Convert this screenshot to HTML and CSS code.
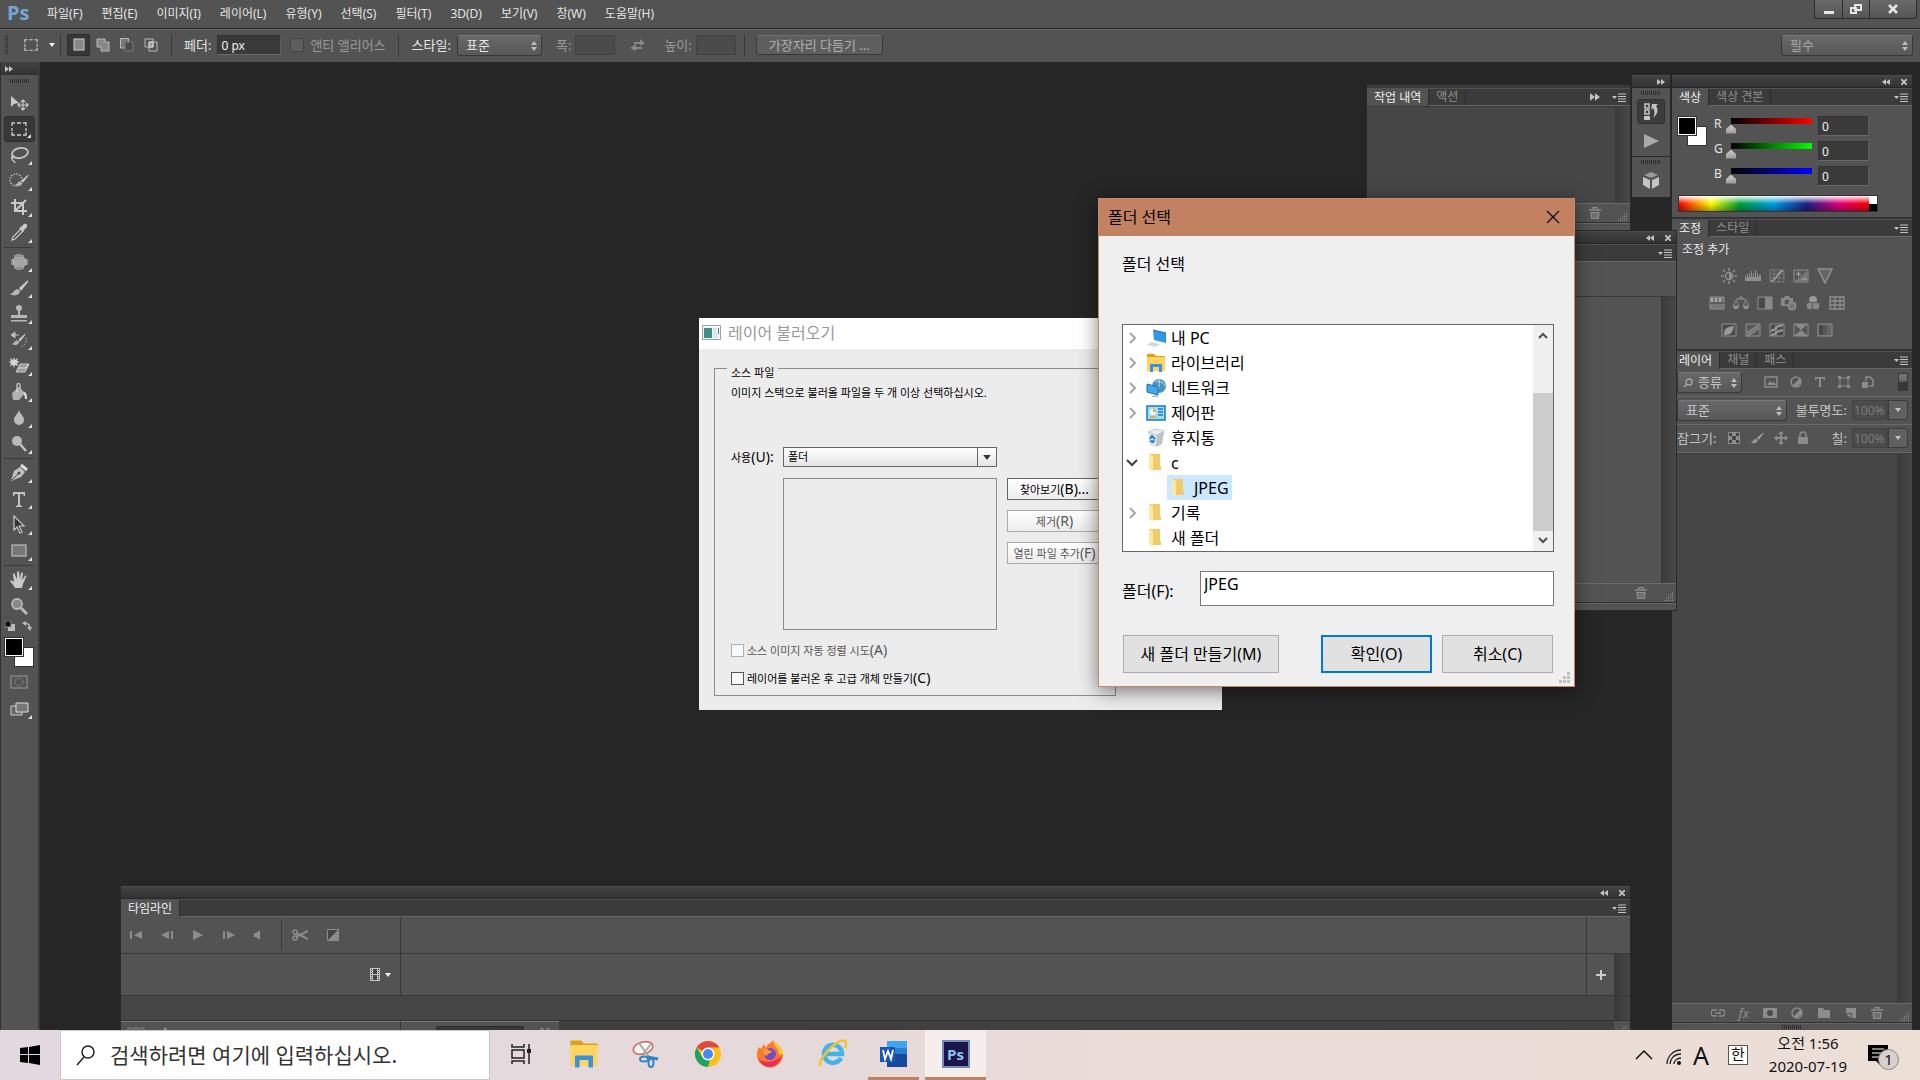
FILE: index.html
```
<!DOCTYPE html>
<html lang="ko">
<head>
    <meta charset="UTF-8">
    <meta name="viewport" content="width=device-width, initial-scale=1.0">
    <title>Photoshop</title>
    <link rel="stylesheet" href="styles.css">
</head>
<body>
    <!-- shared icons -->
    <svg class="sprite" aria-hidden="true">
        <symbol id="i-right" viewBox="0 0 8 6"><path d="M0 0l4 3-4 3zM4 0l4 3-4 3z" fill="#c4c4c4"/></symbol>
        <symbol id="i-left" viewBox="0 0 8 6"><path d="M4 0L0 3l4 3zM8 0L4 3l4 3z" fill="#c4c4c4"/></symbol>
        <symbol id="i-close" viewBox="0 0 6 6"><path d="M0 0l6 6M6 0L0 6" stroke="#c4c4c4" stroke-width="1.8"/></symbol>
        <symbol id="i-menu" viewBox="0 0 14 9"><path d="M0 3h5L2.500 6z" fill="#c4c4c4"/><path d="M6 1h8M6 3.500h8M6 6h8M6 8.500h8" stroke="#c4c4c4"/></symbol>
        <symbol id="i-updown" viewBox="0 0 6 10"><path d="M0 4l3-4 3 4zM0 6l3 4 3-4z" fill="#bdbdbd"/></symbol>
        <symbol id="i-down" viewBox="0 0 6 4"><path d="M0 0h6L3 4z" fill="currentColor"/></symbol>
        <symbol id="i-trash" viewBox="0 0 12 12"><path d="M4 2V.5h4V2M0 3h12" stroke="#8c8c8c" stroke-width="1.500" fill="none"/><path d="M1.500 5h9L10 12H2z" fill="#8c8c8c"/><path d="M4 6v5M6 6v5M8 6v5" stroke="#535353"/></symbol>
        <symbol id="i-grip" viewBox="0 0 10 10"><path d="M8 0h1v1H8zM6 2h1v1H6zM8 2h1v1H8zM4 4h1v1H4zM6 4h1v1H6zM8 4h1v1H8zM2 6h1v1H2zM4 6h1v1H4zM6 6h1v1H6zM8 6h1v1H8zM0 8h1v1H0zM2 8h1v1H2zM4 8h1v1H4zM6 8h1v1H6zM8 8h1v1H8z" fill="#8c8c8c"/></symbol>
        <symbol id="i-brush" viewBox="0 0 20 20"><path d="M19 2L10 10l2 3 7-9z" fill="#c9c9c9"/><path d="M9 11c-4 0-4 4-8 5 4 3 10 1 10-3z" fill="#b5b5b5"/></symbol>
        <symbol id="i-marquee" viewBox="0 0 16 14"><path d="M1 4V1h3M6 1h4M12 1h3v3M15 6v3M15 10v3h-3M10 13H6M4 13H1v-3M1 9V6" fill="none" stroke="#cfcfcf" stroke-width="1.300"/></symbol>
        <symbol id="i-expand" viewBox="0 0 8 12"><path d="M1 1l5 5-5 5" fill="none" stroke="#a6a6a6" stroke-width="2"/></symbol>
        <symbol id="i-folder" viewBox="0 0 20 20"><path d="M4 1h10v12l1 1v3H4z" fill="#f0cb69"/><path d="M3 1l4 2v16l-4-3z" fill="#ffe9a2"/></symbol>
        <symbol id="i-explorer" viewBox="0 0 20 20"><path d="M1 3V1h7l2 2h9v3H1z" fill="#e0a014"/><path d="M1 4h18v14H1z" fill="#ffd562"/><path d="M4 19v-8h12v8h-3v-5H7v5z" fill="#3d92da"/></symbol>
        <symbol id="i-half" viewBox="0 0 12 12"><circle cx="6" cy="6" r="5" fill="none" stroke="#8c8c8c" stroke-width="1.500"/><path d="M2 10A6 6 0 0 0 10 2z" fill="#8c8c8c"/></symbol>
    </svg>

    <div class="desktop">
        <header class="menubar">
            <span class="ps-logo">Ps</span>
            <nav>
                <a href="#">파일(F)</a>
                <a href="#">편집(E)</a>
                <a href="#">이미지(I)</a>
                <a href="#">레이어(L)</a>
                <a href="#">유형(Y)</a>
                <a href="#">선택(S)</a>
                <a href="#">필터(T)</a>
                <a href="#">3D(D)</a>
                <a href="#">보기(V)</a>
                <a href="#">창(W)</a>
                <a href="#">도움말(H)</a>
            </nav>
            <div class="win-buttons">
                <button aria-label="최소화"><svg width="12" height="12"><path d="M1 8h10v3H1z" fill="#e6e6e6"/></svg></button>
                <button aria-label="복원"><svg width="12" height="12"><path d="M5 2h6v5H5zM1 5h5v5H1z" fill="none" stroke="#e6e6e6" stroke-width="2"/></svg></button>
                <button class="wide" aria-label="닫기"><svg width="12" height="12"><path d="M2 2l8 8M10 2l-8 8" stroke="#e6e6e6" stroke-width="2.500"/></svg></button>
            </div>
        </header>

        <div class="options">
            <span class="vgrip"></span>
            <button class="plain preset" aria-label="도구 사전 설정"><svg width="14" height="14"><use href="#i-marquee"/></svg><svg class="light" width="6" height="4"><use href="#i-down"/></svg></button>
            <span class="vsep"></span>
            <div class="modes">
                <button class="on" aria-label="새 선택 영역"><svg width="14" height="14"><rect x="2" y="1" width="10" height="11" fill="#888" stroke="#ccc"/></svg></button>
                <button aria-label="추가"><svg width="14" height="14"><path d="M1 1h8v3h4v9H5V9H1z" fill="#888" stroke="#bbb"/></svg></button>
                <button aria-label="빼기"><svg width="14" height="14"><path d="M4.500 10h-4V.5h8V4" fill="#777" stroke="#bbb"/><path d="M5 4h8v9H5z" fill="#4a4a4a" stroke="#777"/></svg></button>
                <button aria-label="교차"><svg width="14" height="14"><path d="M1 1h8v8H1zM5 4h8v9H5z" fill="none" stroke="#bbb"/><path d="M5 4h4v5H5z" fill="#999" stroke="#ddd"/></svg></button>
            </div>
            <span class="vsep"></span>
            <label class="field feather">페더: <input class="box" type="text" value="0 px"></label>
            <label class="field check off"><input type="checkbox" disabled> 앤티 앨리어스</label>
            <span class="vsep"></span>
            <label class="field style">스타일:
                <span class="select"><select><option>표준</option></select><svg width="6" height="10"><use href="#i-updown"/></svg></span>
            </label>
            <label class="field off size">폭: <input class="box" type="text" disabled></label>
            <svg width="16" height="14"><path d="M4 4h6V1l5 4-5 3V6H4zM12 9H6V6l-6 4 6 3v-2h6z" fill="#888"/></svg>
            <label class="field off size">높이: <input class="box" type="text" disabled></label>
            <span class="vsep"></span>
            <button class="refine">가장자리 다듬기 ...</button>
            <span class="select workspace-select"><select aria-label="작업 영역" disabled><option>필수</option></select><svg width="6" height="10"><use href="#i-updown"/></svg></span>
        </div>

        <main class="workspace">
            <aside class="toolbox">
                <div class="tool-head"><svg width="8" height="6"><use href="#i-right"/></svg></div>
                <span class="hgrip"></span>
                <div class="tools">
                    <button class="solo" aria-label="이동"><svg viewBox="0 0 20 20"><path d="M2 3v11l3-3 5-1z" fill="#c9c9c9"/><path d="M14 7v10M9 12h10M12 9l2-2 2 2M12 15l2 2 2-2M11 10l-2 2 2 2M17 10l2 2-2 2" fill="none" stroke="#c9c9c9" stroke-width="1.200"/></svg></button>
                    <button class="on" aria-label="선택 윤곽"><svg viewBox="0 0 20 20"><use href="#i-marquee" x="2" y="3" width="16" height="14"/></svg></button>
                    <button aria-label="올가미"><svg viewBox="0 0 20 20"><ellipse cx="11" cy="8" rx="8" ry="5" fill="none" stroke="#c4c4c4" stroke-width="1.800" transform="rotate(-12 11 8)"/><path d="M4 10c-3 2 0 4 1 2s-3-1-2 2 3 2 3 4" fill="none" stroke="#c4c4c4" stroke-width="1.400"/></svg></button>
                    <button aria-label="빠른 선택"><svg viewBox="0 0 20 20"><circle cx="7" cy="9" r="6" fill="none" stroke="#c4c4c4" stroke-width="1.400" stroke-dasharray="1.400 1.400"/><use href="#i-brush" x="5" y="1" width="15" height="17"/></svg></button>
                    <button aria-label="자르기"><svg viewBox="0 0 20 20"><path d="M6 2v12h12M2 6h12v12M7 13L17 3" fill="none" stroke="#c9c9c9" stroke-width="2"/></svg></button>
                    <button aria-label="스포이드"><svg viewBox="0 0 20 20"><path d="M3 17l1-3 8-8 2 2-8 8z" fill="#444" stroke="#c9c9c9" stroke-width="1.300"/><path d="M10 5l2-1 3-3c2-1 4 1 3 3l-3 3-1 2z" fill="#c9c9c9"/></svg></button>
                    <hr>
                    <button aria-label="복구 브러시"><svg viewBox="0 0 20 20"><rect x="4" y="5" width="13" height="10" rx="4" fill="#a4a4a4"/><path d="M6 3v3M8 2v3M10 2v3M12 2v3M14 3v3M6 14v3M8 15v3M10 15v3M12 15v3M14 14v3M2 8h3M2 10h3M2 12h3M16 8h3M16 10h3M16 12h3" stroke="#d0d0d0"/></svg></button>
                    <button aria-label="브러시"><svg viewBox="0 0 20 20"><use href="#i-brush" width="20" height="20"/></svg></button>
                    <button aria-label="도장"><svg viewBox="0 0 20 20"><circle cx="10" cy="4" r="3" fill="#b8b8b8"/><path d="M9 6h2v5h7v3H2v-3h7zM2 16h16v1.500H2z" fill="#b8b8b8"/></svg></button>
                    <button aria-label="작업 내역 브러시"><svg viewBox="0 0 20 20"><use href="#i-brush" x="2" y="1" width="15" height="17"/><path d="M2 5h8M2 5l4-3v6z" stroke="#bbb" fill="#bbb"/><path d="M17 8c1 5-2 8-6 9" fill="none" stroke="#bbb" stroke-dasharray="1.500 1.500"/></svg></button>
                    <button aria-label="지우개"><svg viewBox="0 0 20 20"><path d="M5 1l1 3 3-2-1 3 3 1-3 1 1 3-3-1-1 3-1-3-3 1 1-3-3-1 3-1-1-3 3 2z" fill="#d4d4d4"/><path d="M11 8h9l-4 8H7z" fill="#999" stroke="#ccc"/><path d="M9 12h8l3-4" fill="none" stroke="#ddd"/></svg></button>
                    <button aria-label="페인트 통"><svg viewBox="0 0 20 20"><path d="M3 11l7-6 6 6-6 7H4z" fill="#b2b2b2"/><path d="M8 10V3c0-2 3-2 3 0v4" fill="none" stroke="#ddd" stroke-width="1.200"/><path d="M16 10c2 2 2 4 2 7h-2c0-3-1-5-2-6z" fill="#ddd"/></svg></button>
                    <button aria-label="흐림 효과"><svg viewBox="0 0 20 20"><path d="M10 2c1 4 5 6 5 10a5 5 0 0 1-10 0c0-4 4-6 5-10z" fill="#bcbcbc"/></svg></button>
                    <button aria-label="닷지"><svg viewBox="0 0 20 20"><circle cx="8" cy="7" r="5" fill="#b8b8b8"/><path d="M11 10l6 7" stroke="#ccc" stroke-width="2"/></svg></button>
                    <hr>
                    <button aria-label="펜"><svg viewBox="0 0 20 20"><path d="M2 18l3-10 6-4 5 5-4 5z" fill="#c0c0c0"/><path d="M12 2l6 5" stroke="#ddd" stroke-width="3"/><path d="M3 17l6-6" stroke="#444"/><circle cx="10" cy="10" r="1.500" fill="#444"/></svg></button>
                    <button aria-label="문자"><svg viewBox="0 0 20 20"><path d="M4 3h12v4h-1l-1-2h-3v11l2 1v1H7v-1l2-1V5H6L5 7H4z" fill="#c4c4c4"/></svg></button>
                    <button aria-label="선택"><svg viewBox="0 0 20 20"><path d="M5 1v14l3-3 3 6 2-1-3-6h5z" fill="#333" stroke="#c9c9c9" stroke-width="1.200"/></svg></button>
                    <button aria-label="사각형"><svg viewBox="0 0 20 20"><rect x="3" y="4" width="14" height="11" fill="#777" stroke="#bdbdbd" stroke-width="1.200"/></svg></button>
                    <hr>
                    <button aria-label="손"><svg viewBox="0 0 20 20"><path d="M6 18c-1-3-4-5-5-7 1-1 3 0 4 1L4 4c1-1 2-1 2 1l2 4V2c1-1 2-1 2 0l1 7 1-6c1-1 2 0 2 1l-1 6 3-4c1-1 2 0 1 1l-3 7-1 4z" fill="#c9c9c9"/></svg></button>
                    <button class="solo" aria-label="돋보기"><svg viewBox="0 0 20 20"><circle cx="8" cy="8" r="5" fill="#888" stroke="#b8b8b8" stroke-width="1.800"/><path d="M12 12l6 6" stroke="#b8b8b8" stroke-width="3"/></svg></button>
                </div>
                <div class="swatch-tools">
                    <svg width="10" height="10"><path d="M3 3h7v7H3z" fill="#bbb"/><path d="M0 0h6v6H0z" fill="#111" stroke="#999"/></svg>
                    <svg width="10" height="10"><path d="M2 2c4 0 6 2 6 6" fill="none" stroke="#bbb" stroke-width="1.500"/><path d="M0 2l4-2v5zM8 10L5 6h5z" fill="#bbb"/></svg>
                </div>
                <div class="swatches"><span class="bg"></span><span class="fg"></span></div>
                <div class="tools">
                    <button class="solo" aria-label="빠른 마스크"><svg viewBox="0 0 20 20"><rect x="2" y="4" width="16" height="12" fill="none" stroke="#999"/><circle cx="10" cy="10" r="4" fill="none" stroke="#aaa" stroke-dasharray="1 1"/></svg></button>
                    <button aria-label="화면 모드"><svg viewBox="0 0 20 20"><path d="M2 7h11v9H2z" fill="#666" stroke="#ccc"/><path d="M7 4h12v9H7z" fill="#777" stroke="#ddd"/></svg></button>
                </div>
            </aside>

            <section class="panel timeline">
                <div class="panel-head"><svg width="8" height="6"><use href="#i-left"/></svg><svg width="6" height="6"><use href="#i-close"/></svg></div>
                <div class="tabs"><button class="tab on">타임라인</button><svg class="menu" width="14" height="9"><use href="#i-menu"/></svg></div>
                <div class="tl-row controls">
                    <div class="tl-left">
                        <svg width="12" height="10"><path d="M0 1h2v8H0zM12 1v8L4 5z" fill="#8c8c8c"/></svg>
                        <svg width="12" height="10"><path d="M10 1h2v8h-2zM8 1v8L0 5z" fill="#8c8c8c"/></svg>
                        <svg width="12" height="10"><path d="M1 0l10 5-10 5z" fill="#8c8c8c"/></svg>
                        <svg width="12" height="10"><path d="M0 1h2v8H0zM4 1l8 4-8 4z" fill="#8c8c8c"/></svg>
                        <svg width="12" height="10"><path d="M0 3h2l4-3v10L2 7H0z" fill="#8c8c8c"/></svg>
                        <span class="vsep"></span>
                        <svg width="16" height="12"><path d="M4 4l12 6M4 8l12-6" stroke="#8c8c8c" stroke-width="2"/><circle cx="3" cy="3" r="2" fill="none" stroke="#8c8c8c" stroke-width="1.500"/><circle cx="3" cy="9" r="2" fill="none" stroke="#8c8c8c" stroke-width="1.500"/></svg>
                        <svg class="trans" width="12" height="12"><path d="M.5.5h11v11H.5z" fill="#444" stroke="#8c8c8c"/><path d="M12 0v12H0z" fill="#8c8c8c"/></svg>
                    </div>
                    <div class="tl-mid"></div>
                    <div class="tl-wide"></div>
                </div>
                <div class="tl-row track">
                    <div class="tl-left film">
                        <svg width="10" height="13"><path d="M0 0h10v13H0z" fill="#c4c4c4"/><path d="M3 1h4v5H3zM3 7h4v5H3zM1 1h1v1H1zM1 3h1v1H1zM1 5h1v1H1zM1 7h1v1H1zM1 9h1v1H1zM1 11h1v1H1zM8 1h1v1H8zM8 3h1v1H8zM8 5h1v1H8zM8 7h1v1H8zM8 9h1v1H8zM8 11h1v1H8z" fill="#444"/></svg>
                        <svg class="light" width="6" height="4"><use href="#i-down"/></svg>
                    </div>
                    <div class="tl-mid"></div>
                    <button class="tl-add" aria-label="미디어 추가"><svg width="10" height="10"><path d="M5 0v10M0 5h10" stroke="#ccc" stroke-width="2"/></svg></button>
                    <div class="tl-scroll"></div>
                </div>
                <div class="tl-band"><div class="tl-scroll"></div></div>
                <div class="tl-foot">
                    <div class="tl-left"><svg width="18" height="12"><path d="M1 1h4v8H1zM7 1h4v8H7zM13 1h4v8h-4z" fill="none" stroke="#888"/></svg><svg width="14" height="12"><path d="M0 9c0-5 4-6 7-6V0l6 5-6 5V7C4 7 2 8 0 9z" fill="#999"/></svg></div>
                    <div class="tl-zoom"><span></span><svg width="14" height="8"><path d="M0 8l4-6 3 4 3-4 4 6" fill="none" stroke="#999"/></svg></div>
                    <div class="tl-corner"><svg width="10" height="10"><use href="#i-grip"/></svg></div>
                </div>
            </section>

            <div class="dock">
                <div class="dock-icons">
                    <div class="panel-head"><svg width="8" height="6"><use href="#i-right"/></svg></div>
                    <div class="icon-group">
                        <span class="hgrip"></span>
                        <button class="on" aria-label="작업 내역"><svg width="16" height="18"><path d="M2 1h4v4H2zM2 7h4v4H2z" fill="none" stroke="#c4c4c4" stroke-width="1.500"/><path d="M1 13h6v4H1z" fill="#c4c4c4"/><path d="M9 1h6l-2 2c3 4 1 9-3 12 2-4 2-7 0-10L8 7z" fill="#c4c4c4"/></svg></button>
                        <button aria-label="액션"><svg width="16" height="16"><path d="M1 1l15 7-15 7z" fill="#aaa"/></svg></button>
                    </div>
                    <div class="icon-group last">
                        <span class="hgrip"></span>
                        <button aria-label="3D"><svg width="16" height="18"><path d="M8 0l7 3-7 3-7-3z" fill="#999"/><path d="M0 5l7 3v9l-7-4zM16 5L9 8v9l7-4z" fill="#c4c4c4"/></svg></button>
                    </div>
                </div>
                <div class="dock-main">
                    <div class="panel-head"><svg width="8" height="6"><use href="#i-left"/></svg><svg width="6" height="6"><use href="#i-close"/></svg></div>
                    <section class="group color">
                        <div class="tabs"><button class="tab on">색상</button><button class="tab">색상 견본</button><svg class="menu" width="14" height="9"><use href="#i-menu"/></svg></div>
                        <div class="color-body">
                            <div class="swatches"><span class="bg"></span><span class="fg"></span></div>
                            <div class="channels">
                                <div class="channel red"><label for="r">R</label><input type="range" aria-label="R 슬라이더" max="255" value="0"><input class="box" id="r" type="text" value="0"></div>
                                <div class="channel green"><label for="g">G</label><input type="range" aria-label="G 슬라이더" max="255" value="0"><input class="box" id="g" type="text" value="0"></div>
                                <div class="channel blue"><label for="b">B</label><input type="range" aria-label="B 슬라이더" max="255" value="0"><input class="box" id="b" type="text" value="0"></div>
                            </div>
                        </div>
                        <div class="spectrum"><span class="hues"></span><span class="ends"></span></div>
                    </section>
                    <section class="group adjust">
                        <div class="tabs"><button class="tab on">조정</button><button class="tab">스타일</button><svg class="menu" width="14" height="9"><use href="#i-menu"/></svg></div>
                        <p>조정 추가</p>
                        <div class="adjust-row">
                            <svg viewBox="0 0 16 16"><circle cx="8" cy="8" r="3.500" fill="none" stroke="#8f8f8f" stroke-width="1.500"/><path d="M8 5v6a3 3 0 0 0 0-6z" fill="#8f8f8f"/><path d="M8 0v3M8 13v3M0 8h3M13 8h3M2 2l2 2M12 12l2 2M14 2l-2 2M4 12l-2 2" stroke="#8f8f8f" stroke-width="1.500"/></svg>
                            <svg viewBox="0 0 16 16"><path d="M0 13V8h1v2h1V6h1v3h1V5h1v4h1V3h1v6h1V5h1v4h1V2h1v7h1V5h1v4h1V7h2v6z" fill="#8f8f8f"/></svg>
                            <svg viewBox="0 0 16 16"><path d="M1 2h14v12H1zM5 2v12M10 2v12M1 6h14M1 10h14" fill="none" stroke="#7d7d7d"/><path d="M2 13c7-1 5-9 12-10" fill="none" stroke="#a5a5a5" stroke-width="1.500"/></svg>
                            <svg viewBox="0 0 16 16"><path d="M1 2h14v12H1z" fill="#555" stroke="#8f8f8f"/><path d="M15 2v12H1z" fill="#777"/><path d="M3 6h5M5.500 3.500v5M9 11h5" stroke="#b0b0b0"/></svg>
                            <svg viewBox="0 0 16 16"><path d="M1 1h14L8 15z" fill="#666" stroke="#8f8f8f" stroke-width="1.500"/></svg>
                        </div>
                        <div class="adjust-row">
                            <svg viewBox="0 0 16 16"><path d="M1 2h14v12H1z" fill="#777" stroke="#8f8f8f"/><path d="M3 3v4M7 3v4M11 3v4" stroke="#aaa" stroke-width="2"/><path d="M1 8h14" stroke="#444"/></svg>
                            <svg viewBox="0 0 16 16"><path d="M8 1v3M3 4h10M3 5l-3 6h6zM13 5l-3 6h6zM8 2L5 4M8 2l3 2" fill="none" stroke="#8f8f8f"/><path d="M0 11h6l-1 3H1zM10 11h6l-1 3h-4z" fill="#8f8f8f"/></svg>
                            <svg viewBox="0 0 16 16"><path d="M1 2h14v12H1z" fill="#4a4a4a" stroke="#8f8f8f"/><path d="M8 2h7v12H8z" fill="#888"/></svg>
                            <svg viewBox="0 0 16 16"><path d="M0 3h3l1-2h4l1 2h3v8H0z" fill="#888"/><circle cx="6" cy="7" r="2.500" fill="#555"/><circle cx="11" cy="11" r="4" fill="#777" stroke="#999"/></svg>
                            <svg viewBox="0 0 16 16"><circle cx="8" cy="5" r="4" fill="#999"/><circle cx="5" cy="11" r="4" fill="#888" stroke="#555"/><circle cx="11" cy="11" r="4" fill="#888" stroke="#555"/></svg>
                            <svg viewBox="0 0 16 16"><path d="M1 2h14v12H1zM6 2v12M11 2v12M1 6h14M1 10h14" fill="none" stroke="#8f8f8f" stroke-width="1.300"/></svg>
                        </div>
                        <div class="adjust-row">
                            <svg viewBox="0 0 16 16"><path d="M1 2h14v12H1z" fill="#4a4a4a" stroke="#8f8f8f"/><path d="M3 13c0-8 4-8 10-9-1 7-4 9-10 9z" fill="#999"/></svg>
                            <svg viewBox="0 0 16 16"><path d="M1 2h14v12H1z" fill="#5a5a5a" stroke="#8f8f8f"/><path d="M2 11l12-8M2 14L14 6" stroke="#888" stroke-width="2"/></svg>
                            <svg viewBox="0 0 16 16"><path d="M1 2h14v12H1z" fill="#4a4a4a" stroke="#8f8f8f"/><path d="M2 9l5-2V5l7-2M2 13l5-1v-2l7-2" stroke="#999" fill="none" stroke-width="2"/></svg>
                            <svg viewBox="0 0 16 16"><path d="M1 2h14v12H1z" fill="#555" stroke="#8f8f8f"/><path d="M1 2l7 6 7-6zM1 14l7-6 7 6z" fill="#888"/></svg>
                            <svg viewBox="0 0 16 16"><path d="M1 2h14v12H1z" fill="#666" stroke="#8f8f8f"/><path d="M2 3h4v10H2z" fill="#484848"/><path d="M6 3h4v10H6z" fill="#585858"/></svg>
                        </div>
                    </section>
                    <section class="group layers">
                        <div class="tabs"><button class="tab on">레이어</button><button class="tab">채널</button><button class="tab">패스</button><svg class="menu" width="14" height="9"><use href="#i-menu"/></svg></div>
                        <div class="layer-row">
                            <span class="select kind"><svg class="lens" width="10" height="10"><circle cx="6" cy="4" r="3" fill="none" stroke="#aaa" stroke-width="1.300"/><path d="M4 6L1 9" stroke="#aaa" stroke-width="1.500"/></svg><select aria-label="필터 종류"><option>종류</option></select><svg width="6" height="10"><use href="#i-updown"/></svg></span>
                            <div class="filters">
                                <svg width="14" height="12"><path d="M1 1h12v10H1z" fill="none" stroke="#8c8c8c" stroke-width="1.500"/><path d="M3 9l3-4 2 2 2-1 2 3z" fill="#8c8c8c"/></svg>
                                <svg width="12" height="12"><use href="#i-half"/></svg>
                                <svg width="12" height="12"><path d="M1 1h10v3h-1L9 2.500H7V10l1 1H4l1-1V2.500H3L2 4H1z" fill="#8c8c8c"/></svg>
                                <svg width="12" height="12"><path d="M2 2h8v8H2z" fill="none" stroke="#8c8c8c"/><path d="M0 0h3v3H0zM9 0h3v3H9zM0 9h3v3H0zM9 9h3v3H9z" fill="#8c8c8c"/></svg>
                                <svg width="12" height="12"><path d="M4 5V1h4l3 3v6H7" fill="none" stroke="#8c8c8c" stroke-width="1.500"/><path d="M0 6h6v6H0z" fill="#8c8c8c"/></svg>
                            </div>
                            <span class="toggle"></span>
                        </div>
                        <div class="layer-row">
                            <span class="select blend"><select aria-label="혼합 모드"><option>표준</option></select><svg width="6" height="10"><use href="#i-updown"/></svg></span>
                            <label class="percent">불투명도: <input class="box" type="text" value="100%" disabled></label><button class="drop" aria-label="불투명도 값"><svg width="6" height="4"><use href="#i-down"/></svg></button>
                        </div>
                        <div class="layer-row">
                            <span class="lock-label">잠그기:</span>
                            <div class="locks">
                                <svg width="12" height="12"><path d="M.5.500h11v11H.5z" fill="#444" stroke="#8c8c8c"/><path d="M4 1h4v3H4zM1 4h3v4H1zM8 4h3v4H8zM4 8h4v3H4z" fill="#8c8c8c"/></svg>
                                <svg class="dim" width="16" height="14"><use href="#i-brush"/></svg>
                                <svg width="14" height="14"><path d="M7 0l3 3H8v3h3V4l3 3-3 3V8H8v3h2l-3 3-3-3h2V8H3v2L0 7l3-3v2h3V3H4z" fill="#8c8c8c"/></svg>
                                <svg width="12" height="14"><path d="M3 6V4a3 3 0 0 1 6 0v2" fill="none" stroke="#8c8c8c" stroke-width="1.500"/><path d="M1 6h10v7H1z" fill="#8c8c8c"/></svg>
                            </div>
                            <label class="percent">칠: <input class="box" type="text" value="100%" disabled></label><button class="drop" aria-label="칠 값"><svg width="6" height="4"><use href="#i-down"/></svg></button>
                        </div>
                        <div class="list"><div class="scroll"></div></div>
                        <div class="foot">
                            <svg width="14" height="12"><path d="M6 3H3a3 3 0 0 0 0 6h3M8 3h3a3 3 0 0 1 0 6H8M4 6h6" fill="none" stroke="#8c8c8c" stroke-width="1.500"/></svg>
                            <em>fx</em>
                            <svg width="14" height="12"><path d="M0 1h14v10H0z" fill="#8c8c8c"/><circle cx="7" cy="6" r="3" fill="#4a4a4a"/></svg>
                            <svg width="12" height="12"><use href="#i-half"/></svg>
                            <svg width="14" height="12"><path d="M1 1h5l1 2h6v8H1z" fill="#8c8c8c"/></svg>
                            <svg width="12" height="12"><path d="M1 1h10v10H7V6H1zM1 7h5v4z" fill="#8c8c8c"/></svg>
                            <svg width="12" height="12"><use href="#i-trash"/></svg>
                            <svg class="corner" width="10" height="10"><use href="#i-grip"/></svg>
                        </div>
                        <div class="strip"><span class="hgrip"></span></div>
                    </section>
                </div>
            </div>

            <section class="panel history">
                <div class="strip"></div>
                <div class="tabs"><button class="tab on">작업 내역</button><button class="tab">액션</button><svg class="menu more" width="10" height="8"><use href="#i-right"/></svg><svg class="menu" width="14" height="9"><use href="#i-menu"/></svg></div>
                <div class="list"><div class="scroll"></div></div>
                <div class="foot"><svg width="12" height="12"><use href="#i-trash"/></svg><svg class="corner" width="10" height="10"><use href="#i-grip"/></svg></div>
                <div class="strip"></div>
            </section>

            <section class="panel source">
                <div class="panel-head"><svg width="8" height="6"><use href="#i-left"/></svg><svg width="6" height="6"><use href="#i-close"/></svg></div>
                <div class="tabs"><svg class="menu" width="14" height="9"><use href="#i-menu"/></svg></div>
                <div class="source-top"></div>
                <div class="list"><div class="scroll"></div></div>
                <div class="foot"><svg width="12" height="12"><use href="#i-trash"/></svg><svg class="corner" width="10" height="10"><use href="#i-grip"/></svg></div>
                <div class="strip"></div>
            </section>

            <section class="load-dialog">
                <h2><svg width="20" height="16"><path d="M.5.500h18v14H.5z" fill="#f4f4f4" stroke="#9aa4ac"/><path d="M2 3h8v10H2z" fill="#3f8f86"/><path d="M11 3h4v10h-4z" fill="#dfe5e8"/><path d="M16 3h1v6h-1z" fill="#3c7fae"/></svg>레이어 불러오기</h2>
                <fieldset>
                    <legend>소스 파일</legend>
                    <p>이미지 스택으로 불러올 파일을 두 개 이상 선택하십시오.</p>
                    <div class="use-row">
                        <label for="use">사용<span class="key">(U):</span></label>
                        <span class="use-select"><select id="use"><option>폴더</option></select><i><svg width="8" height="5"><use href="#i-down"/></svg></i></span>
                    </div>
                    <div class="files-row">
                        <div class="files"></div>
                        <div class="file-buttons">
                            <button>찾아보기<span class="key">(B)...</span></button>
                            <button disabled>제거<span class="key">(R)</span></button>
                            <button disabled>열린 파일 추가<span class="key">(F)</span></button>
                        </div>
                    </div>
                    <label class="check-row off"><input type="checkbox" disabled><span>소스 이미지 자동 정렬 시도<span class="key">(A)</span></span></label>
                    <label class="check-row"><input type="checkbox"><span>레이어를 불러온 후 고급 개체 만들기<span class="key">(C)</span></span></label>
                </fieldset>
            </section>

            <section class="folder-dialog">
                <h2>폴더 선택<button aria-label="닫기"><svg width="14" height="14"><path d="M1 1l12 12M13 1L1 13" stroke="#000" stroke-width="1.200"/></svg></button></h2>
                <div class="folder-body">
                    <p>폴더 선택</p>
                    <div class="tree">
                        <ul>
                            <li><svg class="arrow" width="8" height="12"><use href="#i-expand"/></svg><svg class="ico" viewBox="0 0 20 20"><path d="M7 2l13 3v10L8 12z" fill="#2a9be6"/><path d="M7 2l13 3v10" fill="none" stroke="#44657a"/><path d="M5 14l9 2-4 3-9-2z" fill="#d3d9e2"/></svg>내 PC</li>
                            <li><svg class="arrow" width="8" height="12"><use href="#i-expand"/></svg><svg class="ico" viewBox="0 0 20 20"><use href="#i-explorer" width="20" height="20"/></svg>라이브러리</li>
                            <li><svg class="arrow" width="8" height="12"><use href="#i-expand"/></svg><svg class="ico" viewBox="0 0 20 20"><circle cx="13" cy="8" r="7" fill="#4a94bd"/><path d="M9 4c4-2 8 0 10 4M11 13c2-4 3-8 2-12" fill="none" stroke="#b7dced"/><path d="M1 6l11 3v8L1 14z" fill="#36adf2" stroke="#2b6d97"/><path d="M6 18l6-1v2H6z" fill="#a8b8c2"/></svg>네트워크</li>
                            <li><svg class="arrow" width="8" height="12"><use href="#i-expand"/></svg><svg class="ico" viewBox="0 0 20 20"><path d="M1 3h18v14H1z" fill="#9fdcfa" stroke="#1d78b4" stroke-width="1.500"/><circle cx="7" cy="9" r="3" fill="#fff"/><path d="M7 9V6a3 3 0 0 1 3 3z" fill="#f0a020"/><path d="M12 6h5M12 9h5M12 12h5" stroke="#1d78b4" stroke-width="1.500"/><path d="M4 14h6" stroke="#f0a020" stroke-width="1.500"/></svg>제어판</li>
                            <li><span class="arrow"></span><svg class="ico" viewBox="0 0 20 20"><path d="M2 4l8-3 8 2-2 13-6 3-6-2z" fill="#dfe3e7"/><path d="M11 6l7-3-2 13-6 3z" fill="#bcc2c8"/><path d="M2 4l8-3 8 2-7 4z" fill="#eef0f2" stroke="#c5cacf"/><path d="M4 11l2-3 3 3M8 12l-1 2-3-1" fill="none" stroke="#1f7fd0" stroke-width="2"/></svg>휴지통</li>
                            <li><svg class="arrow open" width="12" height="8"><path d="M1 1l5 5 5-5" fill="none" stroke="#404040" stroke-width="2"/></svg><svg class="ico" viewBox="0 0 20 20"><use href="#i-folder" width="20" height="20"/></svg>c</li>
                            <li class="child"><span class="picked"><svg class="ico" viewBox="0 0 20 20"><use href="#i-folder" width="20" height="20"/></svg>JPEG</span></li>
                            <li><svg class="arrow" width="8" height="12"><use href="#i-expand"/></svg><svg class="ico" viewBox="0 0 20 20"><use href="#i-folder" width="20" height="20"/></svg>기록</li>
                            <li><span class="arrow"></span><svg class="ico" viewBox="0 0 20 20"><use href="#i-folder" width="20" height="20"/></svg>새 폴더</li>
                        </ul>
                        <div class="tree-scroll">
                            <svg width="10" height="7"><path d="M1 6l4-4 4 4" fill="none" stroke="#505050" stroke-width="2"/></svg>
                            <span></span>
                            <svg width="10" height="7"><path d="M1 1l4 4 4-4" fill="none" stroke="#505050" stroke-width="2"/></svg>
                        </div>
                    </div>
                    <div class="name-row">
                        <label for="folder">폴더(F):</label>
                        <input id="folder" type="text" value="JPEG">
                    </div>
                    <div class="dialog-buttons">
                        <button class="new">새 폴더 만들기(M)</button>
                        <button class="ok">확인(O)</button>
                        <button>취소(C)</button>
                    </div>
                </div>
                <svg class="resize" width="12" height="12"><path d="M8 0h3v3H8zM4 4h3v3H4zM8 4h3v3H8zM0 8h3v3H0zM4 8h3v3H4zM8 8h3v3H8z" fill="#bfbfbf"/></svg>
            </section>
        </main>

        <footer class="taskbar">
            <button class="start" aria-label="시작"><svg width="22" height="22"><path d="M1 4l8-1v7H1zM10 3l11-2v9H10zM1 11h8v8l-8-1zM10 11h11v10l-11-2z" fill="#000"/></svg></button>
            <label class="search"><svg width="22" height="22"><circle cx="13" cy="8" r="6" fill="none" stroke="#222" stroke-width="1.500"/><path d="M9 13l-7 8" stroke="#222" stroke-width="1.500"/></svg><input type="text" aria-label="검색" placeholder="검색하려면 여기에 입력하십시오."></label>
            <div class="apps">
                <button aria-label="작업 보기"><svg viewBox="0 0 30 30"><path d="M5 5v3h12V5M5 25v-3h12v3M5 11h12v8H5zM22 5v20" fill="none" stroke="#222" stroke-width="1.500"/><path d="M20 10h4v4h-4z" fill="#222"/></svg></button>
                <button aria-label="파일 탐색기"><svg viewBox="0 0 20 20"><use href="#i-explorer" width="20" height="20"/></svg></button>
                <button aria-label="캡처 도구"><svg viewBox="0 0 30 30"><ellipse cx="12" cy="9" rx="10" ry="6" transform="rotate(-15 12 9)" fill="#f5f5f5" stroke="#d9615b" stroke-width="1.500"/><path d="M8 4l10 14M20 5l-8 10" stroke="#aaa" stroke-width="2"/><ellipse cx="13" cy="20" rx="4" ry="2.500" fill="none" stroke="#2f86c5" stroke-width="2"/><ellipse cx="20" cy="24" rx="2.500" ry="4" fill="none" stroke="#2f86c5" stroke-width="2"/><path d="M16 18l11 2" stroke="#2f86c5" stroke-width="3"/></svg></button>
                <button aria-label="Chrome"><svg viewBox="0 0 30 30"><circle cx="15" cy="15" r="13" fill="#fbc116"/><path d="M15 15L3.700 8.500A13 13 0 0 1 26.300 8.500H15z" fill="#dd4b3e"/><path d="M15 28A13 13 0 0 1 3.700 8.500L10 19l7 2z" fill="#1da261"/><circle cx="15" cy="15" r="6.500" fill="#fff"/><circle cx="15" cy="15" r="5" fill="#4587f3"/></svg></button>
                <button aria-label="Firefox"><svg viewBox="0 0 30 30"><path d="M4 8l2 2 3-5 2 4c1-5 5-4 7-8 2 4 9 5 10 14a13 13 0 0 1-26 1c0-4 1-6 2-8z" fill="#ff7a28"/><path d="M3 19c3 4 13 7 24-2-2 7-7 11-12 11S5 25 3 19z" fill="#f02b55"/><path d="M18 2c0 5 6 7 6 14l4-1c0-7-6-9-10-13z" fill="#ffc83a"/><circle cx="15" cy="15" r="6" fill="#7449d4"/><path d="M8 10c4-2 5 2 9 2-1 3-5 2-5 5-3-1-5-4-4-7z" fill="#ff9a2e"/></svg></button>
                <button aria-label="Internet Explorer"><svg viewBox="0 0 30 30"><path d="M24 19a9 9 0 1 1 1-4H9" fill="none" stroke="#42b4e8" stroke-width="4.500"/><path d="M4 27C-2 24 20-2 28 2c2 2 1 5 0 7" fill="none" stroke="#f2c32e" stroke-width="2.500"/></svg></button>
                <button class="running" aria-label="Word"><svg viewBox="0 0 30 30"><path d="M8 2h20v8H8z" fill="#41a5ee"/><path d="M8 9h20v7H8z" fill="#2b7cd3"/><path d="M8 15h20v13H8z" fill="#174a9c"/><path d="M1 8h15v15H1z" fill="#1857b5"/><path d="M4 11l2 9 3-8 3 8 2-9" fill="none" stroke="#fff" stroke-width="1.800"/></svg></button>
                <button class="running active" aria-label="Photoshop"><span class="ps-icon">Ps</span></button>
            </div>
            <div class="tray">
                <svg width="18" height="12"><path d="M1 10l8-8 8 8" fill="none" stroke="#111" stroke-width="1.500"/></svg>
                <svg class="wifi" width="16" height="16"><path d="M1 15C1 8 7 1 15 1M4 15C4 10 8 5 15 5M8 15c0-3 3-6 7-6" fill="none" stroke="#222" stroke-width="1.300"/><circle cx="13" cy="14" r="2" fill="#111"/></svg>
                <span class="lang">A</span>
                <span class="ime">한</span>
                <div class="clock"><span>오전 1:56</span><span>2020-07-19</span></div>
                <button class="notice" aria-label="알림"><svg width="20" height="20"><path d="M0 0h20v16h-8v4l-4-4H0z" fill="#000"/><path d="M4 4h12M4 8h12M4 12h8" stroke="#fff"/></svg><span>1</span></button>
            </div>
        </footer>
    </div>
</body>
</html>
```

FILE: styles.css
```
* {
    box-sizing: border-box;
}
body {
    margin: 0;
    font-family: "Noto Sans", "Noto Sans CJK KR", sans-serif;
    font-size: 12px;
    line-height: 16px;
    color: #e6e6e6;
    background: #262626;
}
button, input, select {
    font: inherit;
    color: inherit;
    margin: 0;
    padding: 0;
    border: 0;
    border-radius: 0;
    background: none;
    appearance: none;
}
h2, p, ul {
    margin: 0;
    padding: 0;
    font-weight: normal;
}
svg {
    display: block;
    flex: none;
}
.sprite {
    position: absolute;
    width: 0;
    height: 0;
}
.desktop {
    display: flex;
    flex-direction: column;
    height: 100vh;
    overflow: hidden;
}
.light {
    color: #f0f0f0;
}
.off {
    color: #9a9a9a;
}

/* menu bar */
.menubar {
    display: flex;
    align-items: flex-start;
    height: 29px;
    background: #535353;
    border-bottom: 1px solid #262626;
}
.ps-logo {
    width: 39px;
    padding-left: 7px;
    font: bold 20px/25px "Open Sans", sans-serif;
    color: #76a5d8;
}
.menubar nav {
    display: flex;
    gap: 19px;
    padding: 6px 0 0 8px;
}
.menubar a {
    color: #e6e6e6;
    text-decoration: none;
}
.win-buttons {
    display: flex;
    margin: 0 3px 0 auto;
    border: 1px solid #2e2e2e;
    border-top: 0;
    border-radius: 0 0 3px 3px;
    background: linear-gradient(#6a6a6a, #555);
}
.win-buttons button {
    display: flex;
    justify-content: center;
    align-items: center;
    width: 27px;
    height: 18px;
}
.win-buttons button + button {
    border-left: 1px solid #2e2e2e;
}
.win-buttons .wide {
    width: 47px;
}

/* options bar */
.options {
    display: flex;
    align-items: center;
    height: 33px;
    padding: 0 7px 2px 5px;
    background: #535353;
    border-top: 1px solid #6a6a6a;
    font-size: 13px;
}
.vgrip {
    width: 3px;
    height: 20px;
    background: repeating-linear-gradient(#333 0 1px, #535353 1px 2px);
}
.hgrip {
    display: block;
    width: 20px;
    height: 4px;
    margin: 0 auto;
    background: repeating-linear-gradient(90deg, #2e2e2e 0 1px, #535353 1px 2px);
}
.vsep {
    width: 1px;
    height: 23px;
    background: #3a3a3a;
}
.preset {
    display: flex;
    align-items: center;
    gap: 11px;
    margin: 0 5px 0 16px;
}
.modes {
    display: flex;
    gap: 1px;
    margin: 0 9px 0 6px;
}
.modes button {
    display: grid;
    place-items: center;
    width: 23px;
    height: 22px;
    border-radius: 2px;
}
.modes .on {
    background: #383838;
    border: 1px solid #2e2e2e;
}
.field {
    display: flex;
    align-items: center;
    gap: 6px;
}
.box {
    height: 20px;
    padding: 0 3px;
    font-size: 12px;
    color: #f0f0f0;
    background: #3a3a3a;
    border: 1px solid #323232;
    border-bottom-color: #686868;
    border-right-color: #5e5e5e;
}
.box:disabled {
    color: #7d7d7d;
    background: #4b4b4b;
    border-color: #424242;
}
.feather {
    margin: 0 9px 0 12px;
}
.feather .box {
    width: 64px;
}
.check {
    margin-right: 12px;
}
.check input {
    width: 14px;
    height: 14px;
    border: 1px solid #424242;
    border-radius: 3px;
    background: #5e5e5e;
}
.style {
    margin: 0 14px 0 13px;
}
.select {
    position: relative;
    display: block;
    height: 21px;
}
.select select {
    width: 85px;
    height: 21px;
    padding: 0 8px;
    font-size: 13px;
    line-height: 17px;
    background: linear-gradient(#686868, #585858);
    border: 1px solid #383838;
    border-top-color: #777;
    border-radius: 3px;
    opacity: 1;
}
.select svg {
    position: absolute;
    right: 5px;
    top: 6px;
    pointer-events: none;
}
.size {
    gap: 4px;
}
.size .box {
    width: 40px;
}
.options > svg {
    margin: 0 18px 0 15px;
}
.size + .vsep {
    margin: 0 11px 0 8px;
}
.refine {
    width: 127px;
    height: 20px;
    line-height: 16px;
    color: #b0b0b0;
    background: #5e5e5e;
    border: 1px solid #3a3a3a;
    border-top-color: #6e6e6e;
    border-radius: 3px;
}
.workspace-select {
    margin-left: auto;
}
.workspace-select select {
    width: 132px;
    color: #a8a8a8;
}

/* workspace */
.workspace {
    position: relative;
    flex: 1;
    display: flex;
    justify-content: space-between;
    min-height: 0;
    overflow: hidden;
}
.toolbox {
    width: 40px;
    background: #535353;
    border-left: 1px solid #303030;
    border-right: 2px solid #393939;
}
.tool-head {
    height: 13px;
    margin-bottom: 4px;
    padding: 4px;
    background: linear-gradient(#424242, #333);
}
.toolbox > .hgrip {
    margin-bottom: 7px;
}
.tools {
    display: flex;
    flex-direction: column;
    align-items: center;
    padding-right: 1px;
}
.tools button {
    position: relative;
    display: grid;
    place-items: center;
    width: 31px;
    height: 26px;
    border-radius: 3px;
}
.tools svg {
    width: 20px;
    height: 20px;
}
.tools .on {
    background: #383838;
    border: 1px solid #2e2e2e;
}
.tools button:not(.solo)::after {
    content: "";
    position: absolute;
    right: 3px;
    bottom: 3px;
    border: 2px solid #e0e0e0;
    border-top-color: transparent;
    border-left-color: transparent;
}
.tools hr {
    width: 30px;
    height: 1px;
    margin: 1px 0;
    border: 0;
    background: #3a3a3a;
}
.swatch-tools {
    display: flex;
    justify-content: space-between;
    padding: 2px 6px 6px 4px;
}
.swatches {
    display: grid;
    width: 30px;
    height: 30px;
    margin-left: 3px;
}
.swatches span {
    grid-area: 1 / 1;
    width: 20px;
    height: 20px;
    background: #000;
    border: 1px solid #333;
    box-shadow: inset 0 0 0 1px #fff;
}
.swatches .bg {
    place-self: end;
    background: #fff;
}
.toolbox .tools:last-child {
    gap: 1px;
    padding-top: 2px;
}

/* panels */
.panel {
    position: absolute;
    display: flex;
    flex-direction: column;
    background: #535353;
    border: 1px solid #2a2a2a;
}
.panel-head {
    display: flex;
    flex: none;
    justify-content: flex-end;
    align-items: center;
    gap: 11px;
    height: 13px;
    padding-right: 5px;
    background: linear-gradient(#424242, #333);
    border-top: 1px solid #4a4a4a;
    border-bottom: 1px solid #282828;
}
.tabs {
    display: flex;
    align-items: stretch;
    flex: none;
    height: 18px;
    background: #3b3b3b;
    border-top: 1px solid #525252;
    border-bottom: 1px solid #666;
}
.tab {
    padding: 0 7px;
    line-height: 14px;
    color: #8f8f8f;
    border-right: 1px solid #2c2c2c;
}
.tab.on {
    margin-bottom: -1px;
    color: #f0f0f0;
    background: #535353;
}
.menu {
    margin: 4px 4px 0 auto;
}
.list {
    flex: 1;
    display: flex;
    justify-content: flex-end;
    background: #464646;
    border-top: 1px solid #3a3a3a;
}
.scroll {
    width: 15px;
    background: linear-gradient(90deg, #3a3a3a, #484848);
}
.foot {
    display: flex;
    align-items: center;
    justify-content: flex-end;
    gap: 17px;
    height: 20px;
    padding-right: 2px;
    border-top: 1px solid #6a6a6a;
    border-bottom: 1px solid #333;
}
.foot .corner {
    align-self: flex-end;
}
.strip {
    height: 7px;
    padding-top: 1px;
    border-top: 1px solid #666;
}
.timeline {
    left: 120px;
    right: 289px;
    bottom: -15px;
    height: 160px;
}
.history {
    right: 289px;
    top: 22px;
    width: 265px;
    height: 147px;
}
.history .strip:first-child {
    height: 3px;
    border: 0;
    background: #393939;
}
.history .more {
    margin-right: 12px;
}
.history .more + .menu {
    margin-left: 0;
}
.source {
    right: 243px;
    top: 168px;
    width: 311px;
    height: 381px;
}
.source-top {
    height: 34px;
}
.source .list {
    background: #535353;
}

/* timeline */
.tl-row {
    display: flex;
    flex: none;
    border-bottom: 1px solid #383838;
}
.tl-row > div, .tl-row > button {
    flex: none;
}
.controls {
    height: 37px;
}
.track {
    height: 42px;
}
.tl-left {
    display: flex;
    align-items: center;
    width: 280px;
    border-right: 1px solid #383838;
}
.controls .tl-left {
    gap: 19px;
    padding-left: 9px;
}
.controls .tl-left .vsep {
    height: 32px;
    margin: 0 -9px 0 -4px;
}
.film {
    justify-content: flex-end;
    gap: 5px;
    padding-right: 9px;
}
.tl-row .tl-mid {
    flex: 1;
}
.tl-wide {
    width: 44px;
    border-left: 1px solid #383838;
}
.tl-add {
    display: grid;
    place-items: center;
    width: 28px;
    border-left: 1px solid #383838;
}
.tl-scroll {
    width: 16px;
    background: linear-gradient(90deg, #393939, #464646);
}
.tl-band {
    display: flex;
    flex: none;
    justify-content: flex-end;
    height: 24px;
    background: #464646;
}
.tl-foot {
    display: flex;
    flex: none;
    height: 24px;
    background: #404040;
    border-top: 1px solid #333;
}
.tl-foot .tl-left {
    align-items: flex-start;
    gap: 12px;
    padding: 5px 6px;
    background: #535353;
    border-top: 1px solid #777;
}
.tl-zoom {
    display: flex;
    gap: 14px;
    width: 158px;
    padding: 4px 0 0 35px;
    background: #535353;
    border-top: 1px solid #777;
}
.tl-zoom span {
    width: 88px;
    height: 5px;
    background: #383838;
    border: 1px solid #2a2a2a;
    border-radius: 3px;
}
.tl-corner {
    width: 16px;
    margin-left: auto;
    padding: 5px 3px;
    background: #535353;
}

/* right dock */
.dock {
    display: flex;
    gap: 2px;
    margin: 13px 8px 0 0;
}
.dock-icons {
    width: 38px;
}
.icon-group {
    display: flex;
    flex-direction: column;
    align-items: center;
    gap: 4px;
    height: 69px;
    padding-top: 3px;
    background: #535353;
    border-bottom: 1px solid #2a2a2a;
}
.icon-group button {
    display: grid;
    place-items: center;
    width: 28px;
    height: 25px;
    border-radius: 3px;
}
.icon-group .on {
    background: #3c3c3c;
    border: 1px solid #303030;
}
.icon-group.last {
    height: 41px;
}
.dock-main {
    display: flex;
    flex-direction: column;
    width: 240px;
    background: #535353;
}
.group {
    border-bottom: 2px solid #333;
}
.color {
    height: 131px;
}
.color-body {
    display: flex;
    justify-content: space-between;
    padding: 10px 43px 0 5px;
}
.color-body .swatches {
    margin: 0;
}
.channels {
    display: flex;
    flex-direction: column;
    gap: 5px;
    width: 155px;
}
.channel {
    display: flex;
    justify-content: space-between;
}
.channel label {
    width: 10px;
}
.channel .box {
    width: 51px;
}
.channel input[type="range"] {
    width: 90px;
    height: 18px;
    padding-top: 1px;
}
input[type="range"]::-webkit-slider-runnable-track {
    height: 18px;
    background: linear-gradient(90deg, #000, var(--tone)) no-repeat 5px 1px / 81px 6px;
}
input[type="range"]::-webkit-slider-thumb {
    appearance: none;
    width: 10px;
    height: 9px;
    margin-top: 8px;
    background: linear-gradient(#ccc, #999);
    clip-path: polygon(50% 0, 100% 50%, 100% 100%, 0 100%, 0 50%);
}
.red {
    --tone: #f00;
}
.green {
    --tone: #0f0;
}
.blue {
    --tone: #00f;
}
.spectrum {
    display: flex;
    width: 200px;
    height: 17px;
    margin: 9px 0 0 6px;
    border: 1px solid #333;
}
.hues {
    flex: 1;
    background: linear-gradient(rgba(255,255,255,.95), rgba(255,255,255,0) 50%, rgba(0,0,0,.35)), linear-gradient(90deg, #f00, #ff0 17%, #00a33f 32%, #00a0e9 50%, #1d2088 67%, #e4007f 84%, #f00);
}
.ends {
    width: 8px;
    background: linear-gradient(#fff 50%, #000 50%);
}
.adjust {
    height: 132px;
}
.adjust p {
    padding: 5px 10px 10px;
}
.adjust-row {
    display: flex;
    justify-content: center;
    gap: 8px;
    height: 27px;
    padding-right: 30px;
}
.adjust-row svg {
    width: 16px;
    height: 16px;
}
.layers {
    flex: 1;
    display: flex;
    flex-direction: column;
    border: 0;
}
.layer-row {
    display: flex;
    align-items: center;
    height: 28px;
    padding: 0 4px 1px 5px;
    font-size: 13px;
    color: #c4c4c4;
    border-bottom: 1px solid #6a6a6a;
}
.kind select {
    width: 65px;
    padding-left: 20px;
}
.kind .lens {
    right: auto;
    left: 6px;
    z-index: 1;
}
.blend select {
    width: 110px;
}
.filters {
    display: flex;
    gap: 12px;
    margin-left: 22px;
}
.toggle {
    width: 10px;
    height: 18px;
    margin-left: auto;
    background: linear-gradient(#777, #666 45%, #383838 50%);
    border: 1px solid #383838;
}
.percent {
    display: flex;
    align-items: center;
    gap: 5px;
    margin-left: auto;
}
.percent .box {
    width: 36px;
    padding: 0 1px;
}
.drop {
    display: grid;
    place-items: center;
    width: 20px;
    height: 20px;
    background: #606060;
    border: 1px solid #3a3a3a;
    border-radius: 0 3px 3px 0;
}
.locks {
    display: flex;
    align-items: center;
    gap: 9px;
    margin-left: 12px;
}
.dim {
    opacity: .7;
}
.layers .foot {
    gap: 14px;
}
.layers .foot em {
    font-size: 13px;
    color: #8c8c8c;
}
.layers .foot .corner {
    margin-left: 3px;
}

/* load layers dialog */
.load-dialog {
    position: absolute;
    left: 699px;
    top: 256px;
    width: 523px;
    height: 392px;
    color: #000;
    font-size: 11px;
    background: #ececec;
}
.load-dialog h2 {
    display: flex;
    align-items: center;
    gap: 6px;
    height: 31px;
    padding: 0 3px 2px;
    font-size: 16px;
    line-height: 28px;
    color: #999;
    background: #fff;
}
.load-dialog fieldset {
    width: 402px;
    height: 341px;
    margin: 6px 0 0 15px;
    padding: 4px 13px 0 16px;
    border: 1px solid #8c8c8c;
}
.load-dialog legend {
    margin-left: -4px;
    padding: 10px 4px 0;
}
.key {
    font-size: 14px;
}
.use-row {
    display: flex;
    margin-top: 46px;
}
.use-row label {
    width: 52px;
    line-height: 20px;
}
.use-select {
    display: flex;
    width: 214px;
    height: 20px;
    background: linear-gradient(#fff, #e4e4e4);
    border: 1px solid #666;
}
.use-select select {
    flex: 1;
    padding: 0 4px;
}
.use-select i {
    display: grid;
    place-items: center;
    width: 19px;
    color: #333;
    border-left: 1px solid #666;
}
.files-row {
    display: flex;
    justify-content: space-between;
    width: 371px;
    margin: 10px 0 12px;
    padding-left: 52px;
}
.files {
    width: 214px;
    height: 152px;
    border: 1px solid #8c8c8c;
}
.file-buttons {
    display: flex;
    flex-direction: column;
    gap: 10px;
    width: 95px;
}
.file-buttons button {
    height: 22px;
    white-space: nowrap;
    background: linear-gradient(#fff, #ececec);
    border: 1px solid #666;
}
.file-buttons button:disabled {
    color: #555;
    border-color: #aaa;
}
.check-row {
    display: flex;
    align-items: center;
    gap: 3px;
    height: 16px;
    margin-bottom: 12px;
}
.check-row.off {
    color: #555;
}
.check-row input {
    width: 13px;
    height: 13px;
    background: #f8f8f8;
    border: 1px solid #555;
}
.check-row.off input {
    border-color: #b0b0b0;
}

/* folder picker dialog */
.folder-dialog {
    position: absolute;
    left: 1098px;
    top: 136px;
    width: 477px;
    color: #000;
    font-size: 16px;
    line-height: 24px;
    background: #efefef;
    border: 1px solid #c78a68;
    box-shadow: 0 4px 18px rgba(0,0,0,.5);
}
.folder-dialog h2 {
    display: flex;
    justify-content: space-between;
    align-items: center;
    height: 37px;
    padding: 0 14px 2px 9px;
    font-size: 16px;
    background: #c28160;
}
.folder-body {
    padding: 16px 20px 13px 23px;
}
.tree {
    display: flex;
    height: 228px;
    margin-top: 48px;
    background: #fff;
    border: 1px solid #666;
}
.tree ul {
    flex: 1;
    list-style: none;
}
.tree li {
    display: flex;
    align-items: center;
    height: 25px;
}
.arrow {
    flex: none;
    width: 8px;
    margin: 0 9px 0 6px;
}
.arrow.open {
    width: 12px;
    margin: 0 8px 0 3px;
}
.ico {
    width: 20px;
    height: 20px;
    margin-right: 5px;
}
.child {
    padding-left: 44px;
}
.picked {
    display: flex;
    align-items: center;
    height: 25px;
    padding: 0 3px 0 2px;
    background: #cce8ff;
}
.tree-scroll {
    display: flex;
    flex-direction: column;
    align-items: center;
    width: 20px;
    padding: 7px 0;
    background: #f0f0f0;
}
.tree-scroll span {
    width: 20px;
    height: 138px;
    margin: auto 0 6px;
    background: #cdcdcd;
}
.name-row {
    display: flex;
    align-items: center;
    margin-top: 19px;
}
.name-row label {
    width: 78px;
    padding-top: 4px;
}
.name-row input {
    flex: 1;
    height: 35px;
    padding: 0 3px 9px;
    background: #fff;
    border: 1px solid #7a7a7a;
}
.dialog-buttons {
    display: flex;
    gap: 10px;
    margin-top: 29px;
    padding: 0 1px;
}
.dialog-buttons button {
    width: 111px;
    height: 38px;
    background: #e1e1e1;
    border: 1px solid #adadad;
}
.dialog-buttons .new {
    width: 156px;
    margin-right: auto;
}
.dialog-buttons .ok {
    border: 2px solid #0078d7;
}
.resize {
    position: absolute;
    right: 3px;
    bottom: 2px;
}

/* taskbar */
.taskbar {
    display: flex;
    flex: none;
    height: 50px;
    color: #111;
    background: linear-gradient(90deg, #e2d8e0, #e5d9da 40%, #ebdcd8 60%, #ecdfd6);
}
.start {
    display: grid;
    place-items: center;
    width: 60px;
}
.search {
    display: flex;
    align-items: center;
    gap: 13px;
    width: 430px;
    padding-left: 14px;
    background: #fff;
    border: 1px solid #c8c8c8;
}
.search input {
    flex: 1;
    min-width: 0;
    height: 32px;
    font-size: 21px;
}
.search input::placeholder {
    color: #333;
}
.apps {
    display: flex;
    gap: 1px;
    margin-left: 1px;
}
.apps button {
    display: grid;
    place-items: center;
    width: 61px;
    border-bottom: 3px solid transparent;
}
.apps svg {
    width: 30px;
    height: 30px;
}
.apps .running {
    background: linear-gradient(#c28160, #c28160) no-repeat center bottom / 51px 3px border-box;
}
.apps .active {
    background: #f6eeec;
    border-bottom-color: #c28160;
}
.ps-icon {
    width: 28px;
    height: 28px;
    font: bold 15px/24px "Open Sans", sans-serif;
    color: #8ec4f4;
    background: #1c1648;
    border: 2px solid #6e8fc0;
}
.tray {
    display: flex;
    align-items: center;
    margin-left: auto;
    padding-right: 21px;
}
.wifi {
    margin: 4px 11px 0 13px;
}
.lang {
    width: 35px;
    font-size: 25px;
    line-height: 30px;
}
.ime {
    width: 20px;
    height: 20px;
    font-size: 15px;
    line-height: 17px;
    text-align: center;
    background: #fff;
    border: 1px solid #555;
}
.clock {
    display: flex;
    flex-direction: column;
    align-items: center;
    width: 120px;
    font-size: 15px;
    line-height: 23px;
}
.notice {
    position: relative;
    width: 31px;
    height: 30px;
}
.notice span {
    position: absolute;
    right: 0;
    bottom: 0;
    width: 21px;
    height: 21px;
    font-size: 15px;
    line-height: 19px;
    background: #d8d0ce;
    border: 1px solid #888;
    border-radius: 50%;
}
```
